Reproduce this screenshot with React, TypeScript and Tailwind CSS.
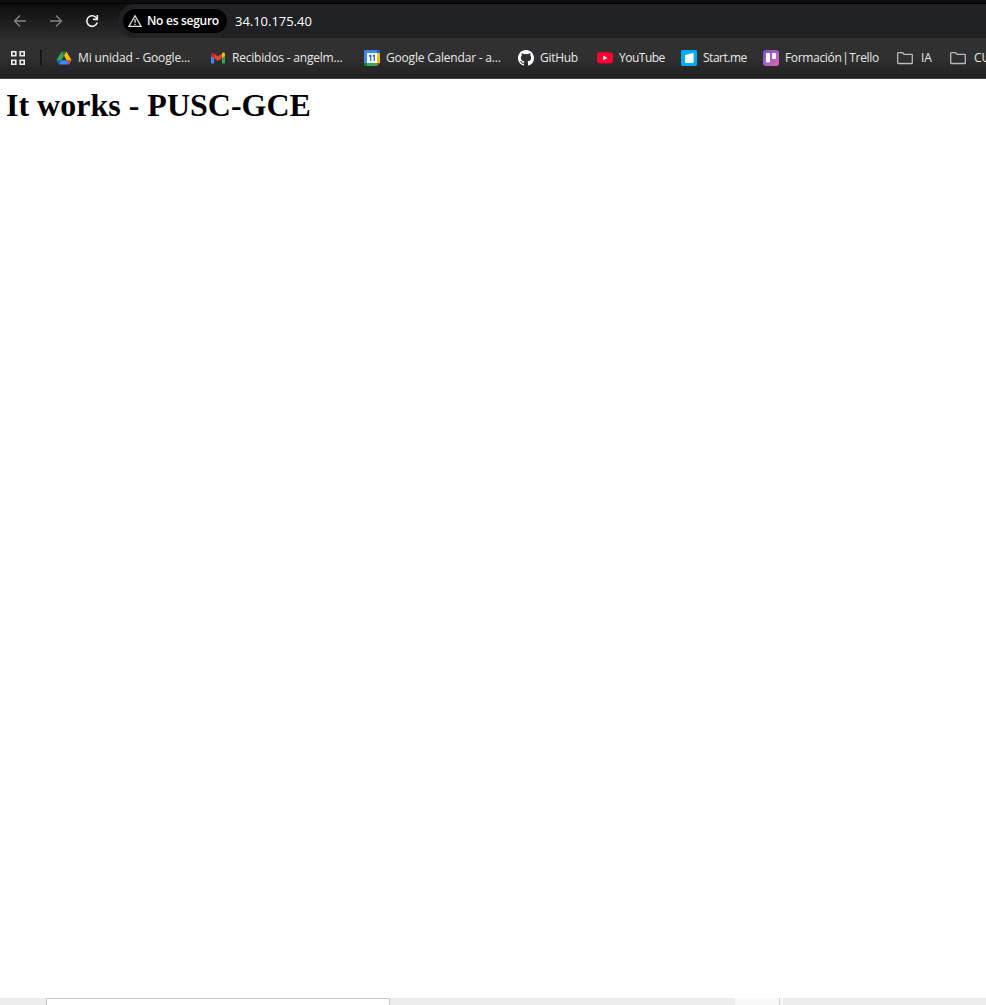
import React from "react";

function Drive() {
  return (
    <svg width="16" height="16" viewBox="-4 -4 95.3 95.3" className="shrink-0">
      <g transform="translate(0 4.6)">
        <path d="m6.6 66.85 3.85 6.65c.8 1.4 1.95 2.5 3.3 3.3l13.75-23.8H0c0 1.55.4 3.1 1.2 4.5z" fill="#1967d2" />
        <path d="M43.65 25 29.9 1.2c-1.35.8-2.5 1.9-3.3 3.3L1.2 48.5C.4 49.9 0 51.45 0 53h27.5z" fill="#34a853" />
        <path d="M73.55 76.8c1.35-.8 2.5-1.9 3.3-3.3L86.1 57.5c.8-1.4 1.2-2.95 1.2-4.5H59.8l5.85 11.5z" fill="#ea4335" />
        <path d="M43.65 25 57.4 1.2C56.05.4 54.5 0 52.9 0H34.4c-1.6 0-3.15.45-4.5 1.2z" fill="#188038" />
        <path d="M59.8 53H27.5L13.75 76.8c1.35.8 2.9 1.2 4.5 1.2h50.8c1.6 0 3.15-.45 4.5-1.2z" fill="#4285f4" />
        <path d="M73.4 26.5 60.7 4.5c-.8-1.4-1.95-2.5-3.3-3.3L43.65 25l16.15 28h27.45c0-1.55-.4-3.1-1.2-4.5z" fill="#fbbc04" />
      </g>
    </svg>
  );
}

function Gmail() {
  return (
    <svg width="16" height="16" viewBox="0 0 16 16" className="shrink-0">
      <path d="M1 4v8.8q0 .7.8.7h2.3V7.4z" fill="#4285f4" />
      <path d="M11.9 7.4v6.1h2.3q.8 0 .8-.7V4z" fill="#34a853" />
      <path d="M11.9 4.1v4L15 5.8V4.2c0-1.6-1.6-2-2.6-1.2z" fill="#fbbc04" />
      <path d="m4.1 8.1V3.6L8 6.5l3.9-2.9v4.5L8 11z" fill="#ea4335" />
      <path d="M1 4.2v1.6l3.1 2.3V3.6L3.5 3C2.5 2.300 1 2.800 1 4.200z" fill="#c5221f" />
    </svg>
  );
}

function Calendar() {
  return (
    <svg width="16" height="16" viewBox="0 0 16 16" className="shrink-0">
      <path d="M1 0h14q1 0 1 1v3H0V1q0-1 1-1z" fill="#4285f4" />
      <path d="M0 4h4v9H0z" fill="#4285f4" />
      <path d="M13 0h2q1 0 1 1v2h-3z" fill="#1967d2" />
      <path d="M13 3h3v10h-3z" fill="#fbbc04" />
      <path d="M0 13h3v3H1q-1 0-1-1z" fill="#188038" />
      <path d="M3 13h10v3H3z" fill="#34a853" />
      <path d="M13 13h3l-3 3z" fill="#ea4335" />
      <path d="M3 3h10v10H3z" fill="#fff" />
      <path d="M5 6.100 6.700 5.300V11M8.600 6.100l1.700-.8V11" fill="none" stroke="#1967d2" strokeWidth="1.200" />
    </svg>
  );
}

function GitHub() {
  return (
    <svg width="16" height="16" viewBox="0 0 16 16" fill="#fff" className="shrink-0">
      <path d="M8 0C3.580 0 0 3.580 0 8c0 3.540 2.290 6.530 5.470 7.590.4.070.55-.17.55-.38 0-.19-.01-.82-.01-1.490-2.010.37-2.530-.49-2.690-.94-.09-.23-.48-.94-.82-1.130-.28-.15-.68-.52-.01-.53.63-.01 1.080.58 1.230.82.72 1.210 1.870.87 2.330.66.070-.52.28-.87.51-1.070-1.780-.2-3.640-.89-3.640-3.950 0-.87.31-1.590.82-2.150-.08-.2-.36-1.020.08-2.120 0 0 .67-.21 2.200.82a7.600 7.600 0 0 1 4 0c1.530-1.040 2.200-.82 2.200-.82.44 1.100.16 1.920.08 2.120.51.56.82 1.270.82 2.150 0 3.070-1.870 3.750-3.650 3.950.29.25.54.73.54 1.480 0 1.070-.01 1.930-.01 2.200 0 .21.15.46.55.38A8.010 8.010 0 0 0 16 8c0-4.420-3.580-8-8-8z" />
    </svg>
  );
}

function YouTube() {
  return (
    <svg width="16" height="16" viewBox="0 0 16 16" className="shrink-0">
      <rect y="2.200" width="16" height="11.400" rx="2.800" fill="#ff0033" />
      <path d="M6.300 5.600v4.700l4.100-2.350z" fill="#fff" />
    </svg>
  );
}

function StartMe() {
  return (
    <svg width="16" height="16" viewBox="0 0 16 16" className="shrink-0">
      <rect width="16" height="16" rx="1.400" fill="#00aaff" />
      <path d="M4 5.800q0-.5.500-.7L12 3q.6-.1.600.4V12q0 1-1 1H5q-1 0-1-1z" fill="#fff" />
    </svg>
  );
}

function Trello() {
  return (
    <svg width="16" height="16" viewBox="0 0 16 16" className="shrink-0">
      <defs>
        <linearGradient id="trello" x1="0" y1="0" x2="1" y2="1">
          <stop stopColor="#7655c8" />
          <stop offset="1" stopColor="#db69b4" />
        </linearGradient>
      </defs>
      <rect width="16" height="16" rx="3" fill="url(#trello)" />
      <rect x="3" y="3" width="4" height="9.500" rx="1" fill="#fff" />
      <rect x="9" y="3" width="4" height="6" rx="1" fill="#fff" />
    </svg>
  );
}

function Folder() {
  return (
    <svg width="16" height="16" viewBox="0 0 16 16" fill="none" stroke="#b8b8b8" strokeWidth="1.300" className="shrink-0">
      <path d="M.7 3.200q0-.6.600-.6h4.200L7 4.300h7.700q.6 0 .6.600v8q0 .6-.6.600H1.300q-.6 0-.6-.6z" />
    </svg>
  );
}

const bookmarks = [
  { icon: <Drive />, label: "Mi unidad - Google...", box: "w-[154px]", text: "tracking-[-0.14px]" },
  { icon: <Gmail />, label: "Recibidos - angelm...", box: "w-[154px]", text: "tracking-[-0.2px]" },
  { icon: <Calendar />, label: "Google Calendar - a...", box: "w-[154px]", text: "tracking-[-0.2px]" },
  { icon: <GitHub />, label: "GitHub", box: "w-[79px]", text: "tracking-[-0.3px]" },
  { icon: <YouTube />, label: "YouTube", box: "w-[84px]", text: "tracking-[-0.5px]" },
  { icon: <StartMe />, label: "Start.me", box: "w-[82px]", text: "tracking-[-0.48px]" },
  { icon: <Trello />, label: "Formación | Trello", box: "w-[134px]", text: "tracking-[-0.33px] [word-spacing:-2px]" },
  { icon: <Folder />, label: "IA", box: "w-[53px]", text: "pl-[2px]" },
  { icon: <Folder />, label: "CU", box: "w-[60px]", text: "pl-[2px]" },
];

export default function App() {
  return (
    <div className="flex h-[1005px] w-full flex-col overflow-hidden bg-white font-['Open_Sans','Noto_Sans',sans-serif] text-white">
      <header className="h-[79px] shrink-0">
        <div className="h-[4px] border-b border-black bg-[#0d0d0d]" />
        <div className="flex h-[34px] items-center bg-linear-to-b from-[#0e0e0e] to-[#2c2c2c]">
          <div className="flex w-[118px] shrink-0 items-center gap-[20px] pl-[12px]">
            <svg width="16" height="16" viewBox="0 0 16 16" fill="none" stroke="#858585" strokeWidth="1.300">
              <path d="M14 8H2.500M8 2.500 2.500 8 8 13.500" />
            </svg>
            <svg width="16" height="16" viewBox="0 0 16 16" fill="none" stroke="#858585" strokeWidth="1.300">
              <path d="M2 8h11.500M8 2.500 13.500 8 8 13.500" />
            </svg>
            <svg width="16" height="16" viewBox="0 0 16 16" fill="none" stroke="#eee" strokeWidth="1.600">
              <path d="M13.200 9.500A5.300 5.300 0 1 1 11.900 4.300L13.200 5.600" />
              <path d="M13.300 2v4.400H9" />
            </svg>
          </div>
          <div className="flex h-[34px] flex-1 items-center rounded-l-full bg-[#202124] pl-[5px]">
            <div className="flex h-[24px] w-[104px] items-center gap-[5px] rounded-full bg-black pl-[5px]">
              <svg width="14" height="14" viewBox="0 0 14 14" fill="none" stroke="#e5e5e5" strokeWidth="1.300" className="shrink-0">
                <path d="M7 1.700 13 12.300H1zM7 5v3.800M7 9.700V11" />
              </svg>
              <span className="text-[12px] font-semibold tracking-[-0.28px] whitespace-nowrap">No es seguro</span>
            </div>
            <span className="pt-px pl-[8px] text-[13px] tracking-[-0.03px]">34.10.175.40</span>
          </div>
        </div>
        <nav className="flex h-[41px] items-center overflow-hidden border-b border-[#444] bg-linear-to-b from-[#303030] from-50% to-[#202020] pl-[10px]">
          <svg width="16" height="16" viewBox="0 0 16 16" fill="none" stroke="#eee" strokeWidth="1.600" className="shrink-0">
            <path d="M1.800 1.800h4v4h-4zM10.200 1.800h4v4h-4zM1.800 10.200h4v4h-4zM10.200 10.200h4v4h-4z" />
          </svg>
          <div className="mr-[14px] ml-[14px] h-[16px] w-[2px] shrink-0 bg-[#171717]" />
          {bookmarks.map((b) => (
            <div key={b.label} className={`flex shrink-0 items-center gap-[6px] ${b.box}`}>
              {b.icon}
              <span className={`text-[12px] leading-[16px] whitespace-nowrap text-[#e8e8e8] ${b.text}`}>{b.label}</span>
            </div>
          ))}
        </nav>
      </header>
      <main className="flex-1 pt-[8px] pl-[6px]">
        <h1 className="font-['Liberation_Serif',serif] text-[32px] leading-[37px] font-bold text-black">It works - PUSC-GCE</h1>
      </main>
      <footer className="flex h-[7px] shrink-0 bg-[#ededed]">
        <div className="ml-[46px] h-full w-[344px] border border-b-0 border-[#c8c8c8] bg-white" />
        <div className="ml-[345px] w-[44px] bg-[#f8f8f8]" />
        <div className="w-px bg-[#d0d0d0]" />
        <div className="w-[3px] bg-[#f6f6f6]" />
      </footer>
    </div>
  );
}
